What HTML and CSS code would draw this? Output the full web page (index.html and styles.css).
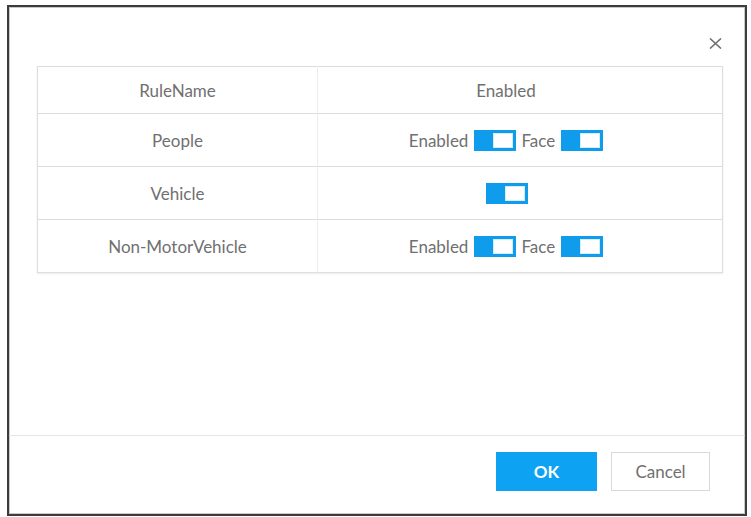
FILE: index.html
```html
<!DOCTYPE html>
<html lang="en">
<head>
    <meta charset="UTF-8">
    <meta name="viewport" content="width=device-width, initial-scale=1.0">
    <title>Rule Config</title>
    <link rel="stylesheet" href="styles.css">
</head>
<body>
    <div class="dialog">
        <div class="dialog-head">
            <button class="close" aria-label="Close">
                <svg width="13" height="11" viewBox="0 0 13 11">
                    <path d="M1 0.5 L12 10.5 M12 0.5 L1 10.5" stroke="#6f6f6f" stroke-width="1.6" fill="none"/>
                </svg>
            </button>
        </div>
        <div class="dialog-body">
            <table class="rules">
                <tr class="head-row">
                    <th class="name-col">RuleName</th>
                    <th class="state-col">Enabled</th>
                </tr>
                <tr>
                    <td class="name-col">People</td>
                    <td class="state-col">
                        <div class="switches">
                            <span>Enabled</span><span class="toggle"><i></i></span>
                            <span>Face</span><span class="toggle"><i></i></span>
                        </div>
                    </td>
                </tr>
                <tr>
                    <td class="name-col">Vehicle</td>
                    <td class="state-col">
                        <div class="switches">
                            <span class="toggle"><i></i></span>
                        </div>
                    </td>
                </tr>
                <tr>
                    <td class="name-col">Non-MotorVehicle</td>
                    <td class="state-col">
                        <div class="switches">
                            <span>Enabled</span><span class="toggle"><i></i></span>
                            <span>Face</span><span class="toggle"><i></i></span>
                        </div>
                    </td>
                </tr>
            </table>
        </div>
        <div class="dialog-foot">
            <button class="btn btn-ok">OK</button>
            <button class="btn btn-cancel">Cancel</button>
        </div>
    </div>
</body>
</html>
```

FILE: styles.css
```css
body {
    margin: 0;
    background-color: #fff;
    font-family: Lato, "Open Sans", sans-serif;
    color: #707070;
}
.dialog {
    box-sizing: border-box;
    margin: 5px 0 0 7px;
    width: 740px;
    height: 511px;
    border: 2px solid #3c3c3c;
    box-shadow: inset 0 0 0 1px #c8c8c8;
    display: flex;
    flex-direction: column;
}
.dialog-head {
    height: 59px;
    box-sizing: border-box;
    padding: 31px 23px 0 0;
    display: flex;
    justify-content: flex-end;
    align-items: flex-start;
}
.close {
    background: none;
    border: none;
    padding: 0;
    width: 13px;
    height: 11px;
    display: block;
}
.close svg {
    display: block;
}
.dialog-body {
    flex: 1;
    padding: 0 22px 0 28px;
}
.rules {
    width: 686px;
    border-collapse: collapse;
    border: 1px solid #dedede;
    box-shadow: 0 1px 2px rgba(0, 0, 0, 0.08);
    font-size: 17px;
}
.rules th,
.rules td {
    border-top: 1px solid #dcdcdc;
    font-weight: normal;
    text-align: center;
    padding: 0;
    height: 52px;
}
.rules .head-row th {
    height: 46px;
}
.name-col {
    width: 279px;
    border-right: 1px solid #ececec;
}
.state-col {
    padding-right: 28px !important;
}
.switches {
    display: flex;
    justify-content: center;
    align-items: center;
    gap: 5px;
}
.toggle {
    box-sizing: border-box;
    width: 42px;
    height: 21px;
    background-color: #0f9ced;
    padding: 3px;
    display: flex;
    justify-content: flex-end;
    margin-left: 1px;
}
.toggle i {
    display: block;
    width: 20px;
    height: 15px;
    box-sizing: border-box;
    background-color: #fff;
    border: 1px solid #d6ecfa;
}
.dialog-foot {
    height: 79px;
    box-sizing: border-box;
    border-top: 1px solid #e6e6e6;
    padding: 16px 35px 0 0;
    display: flex;
    justify-content: flex-end;
    align-items: flex-start;
    gap: 14px;
}
.btn {
    height: 39px;
    font-family: Lato, "Open Sans", sans-serif;
    font-size: 17px;
    cursor: pointer;
}
.btn-ok {
    width: 101px;
    background-color: #0ea3f2;
    color: #fff;
    border: none;
    font-weight: bold;
}
.btn-cancel {
    width: 99px;
    background-color: #fff;
    color: #707070;
    border: 1px solid #d9d9d9;
}
```
